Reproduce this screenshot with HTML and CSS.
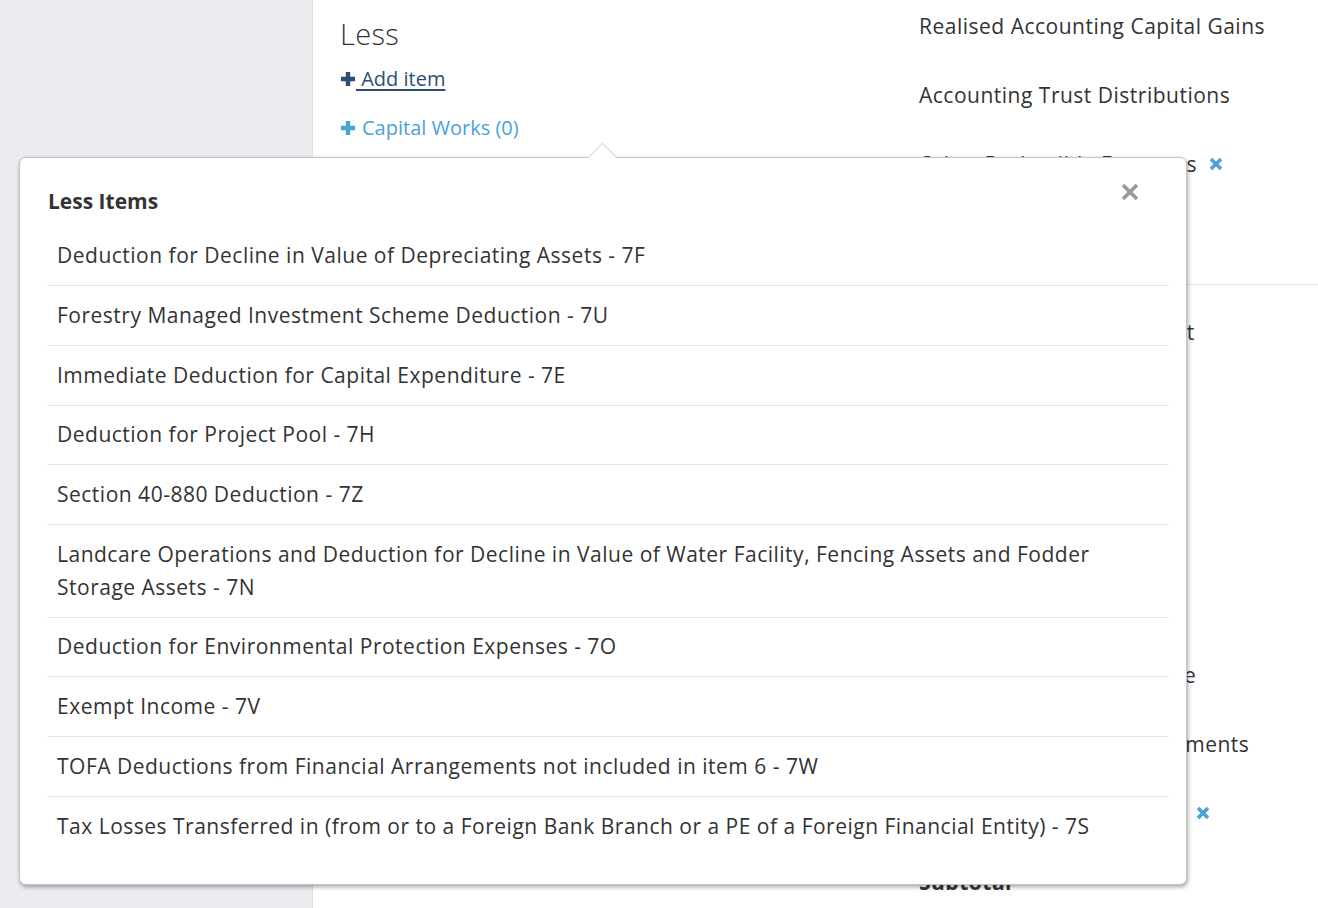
FILE: index.html
```html
<!DOCTYPE html>
<html lang="en">
<head>
<meta charset="UTF-8">
<title>Less Items</title>
<link rel="stylesheet" href="styles.css">
</head>
<body>
<div class="layout">
  <aside class="sidebar"></aside>

  <main class="main">
    <section class="less-col">
      <h2 class="less-title">Less</h2>
      <a href="#" class="add-link">
        <svg class="plus-icon" viewBox="0 0 16 16"><path d="M8 1v14M1 8h14"/></svg><span class="add-text"> Add item</span>
      </a>
      <a href="#" class="works-link">
        <svg class="plus-icon" viewBox="0 0 16 16"><path d="M8 1v14M1 8h14"/></svg>
        Capital Works (0)
      </a>
    </section>

    <section class="recon-col">
      <div class="recon-row">Realised Accounting Capital Gains</div>
      <div class="recon-row">Accounting Trust Distributions</div>
      <div class="recon-row">Other Deductible Expenses
        <svg class="remove-icon" viewBox="0 0 14 14"><path d="M2 2l10 10M12 2L2 12"/></svg>
      </div>
      <div class="recon-divider"></div>
      <div class="recon-row">Franked Credit Adjustment</div>
      <div class="recon-row">Tax Offsets</div>
      <div class="recon-row">Other Income</div>
      <div class="recon-row">Rebates</div>
      <div class="recon-row">Exempt Income</div>
      <div class="recon-row">Non-Assessable Nil Income</div>
      <div class="recon-row">Accounting Income Adjustments</div>
      <div class="recon-row">Non-Deductible Tax Items
        <svg class="remove-icon" viewBox="0 0 14 14"><path d="M2 2l10 10M12 2L2 12"/></svg>
      </div>
      <div class="recon-row subtotal">Subtotal</div>
    </section>
  </main>

  <div class="popover">
    <button class="popover-close" aria-label="Close">
      <svg viewBox="0 0 20 20"><path d="M3 3l14 14M17 3L3 17"/></svg>
    </button>
    <h3 class="popover-title">Less Items</h3>
    <ul class="item-list">
      <li>Deduction for Decline in Value of Depreciating Assets - 7F</li>
      <li>Forestry Managed Investment Scheme Deduction - 7U</li>
      <li>Immediate Deduction for Capital Expenditure - 7E</li>
      <li>Deduction for Project Pool - 7H</li>
      <li>Section 40-880 Deduction - 7Z</li>
      <li>Landcare Operations and Deduction for Decline in Value of Water Facility, Fencing Assets and Fodder Storage Assets - 7N</li>
      <li>Deduction for Environmental Protection Expenses - 7O</li>
      <li>Exempt Income - 7V</li>
      <li>TOFA Deductions from Financial Arrangements not included in item 6 - 7W</li>
      <li>Tax Losses Transferred in (from or to a Foreign Bank Branch or a PE of a Foreign Financial Entity) - 7S</li>
    </ul>
  </div>
</div>
</body>
</html>
```

FILE: styles.css
```css
/* Tax reconciliation - Less items picker */
body {
  font-family: 'Open Sans', Lato, sans-serif;
  margin: 0;
  color: #333;
  background: white;
}

.layout {
  position: relative;
  display: flex;
  height: 908px;
  overflow: hidden;
}

.sidebar {
  width: 312px;
  flex-shrink: 0;
  background: #ebecf0;
  border-right: 1px solid #dfe0e4;
}

.main {
  flex: 1;
  display: flex;
}

.less-col {
  width: 579px;
  padding: 17px 0 0 27px;
}

.less-title {
  margin: 0;
  font-size: 29px;
  font-weight: 300;
  letter-spacing: 0.3px;
  line-height: 34px;
}

.add-link,
.works-link {
  display: flex;
  align-items: center;
  font-size: 20px;
  line-height: 28px;
  text-decoration: none;
}

.add-link {
  margin-top: 14px;
  color: #2c4d75;
}

.add-text {
  white-space: pre;
  text-decoration: underline;
  text-underline-offset: 3px;
}

.works-link {
  margin-top: 21px;
  gap: 6px;
  color: #4aa2d6;
}

.plus-icon {
  width: 16px;
  height: 16px;
  fill: none;
  stroke: currentColor;
  stroke-width: 4.4;
}

.recon-col {
  flex: 1;
}

.recon-row {
  display: flex;
  align-items: center;
  gap: 12px;
  font-size: 21px;
  letter-spacing: 0.5px;
  line-height: 52px;
  margin-bottom: 16.75px;
  white-space: nowrap;
}

.recon-row.subtotal {
  margin-top: 3px;
  font-weight: 700;
}

.remove-icon {
  width: 14px;
  height: 14px;
  fill: none;
  stroke: #4aa2d6;
  stroke-width: 3.6;
}

.recon-divider {
  margin: 94px -20px 21px -20px;
  border-top: 1px solid #e3e3e3;
}

.popover {
  position: absolute;
  left: 19px;
  top: 157px;
  width: 1168px;
  box-sizing: border-box;
  background: white;
  border: 1px solid #c4c4c4;
  border-radius: 7px;
  box-shadow: 1px 2px 4px rgba(0,0,0,0.35);
  padding: 31px 17px 29px 27px;
}

.popover::before {
  content: "";
  position: absolute;
  top: -11px;
  left: 572px;
  width: 20px;
  height: 20px;
  background: white;
  border-top: 1px solid #d0d0d0;
  border-left: 1px solid #d0d0d0;
  transform: rotate(45deg);
}

.popover-close {
  position: absolute;
  top: 24px;
  right: 46px;
  width: 20px;
  height: 20px;
  padding: 0;
  border: none;
  background: none;
  cursor: pointer;
}

.popover-close svg {
  width: 20px;
  height: 20px;
  fill: none;
  stroke: #999;
  stroke-width: 3.6;
}

.popover-title {
  margin: 0 0 0 1px;
  font-size: 21px;
  font-weight: 700;
  line-height: 24px;
}

.item-list {
  list-style: none;
  margin: 13.5px 0 0 0;
  padding: 0;
}

.item-list li {
  font-size: 21px;
  letter-spacing: 0.5px;
  line-height: 33px;
  padding: 12.85px 10px;
  border-bottom: 1px solid #e6e6e6;
}

.item-list li:last-child {
  border-bottom: none;
}
```
